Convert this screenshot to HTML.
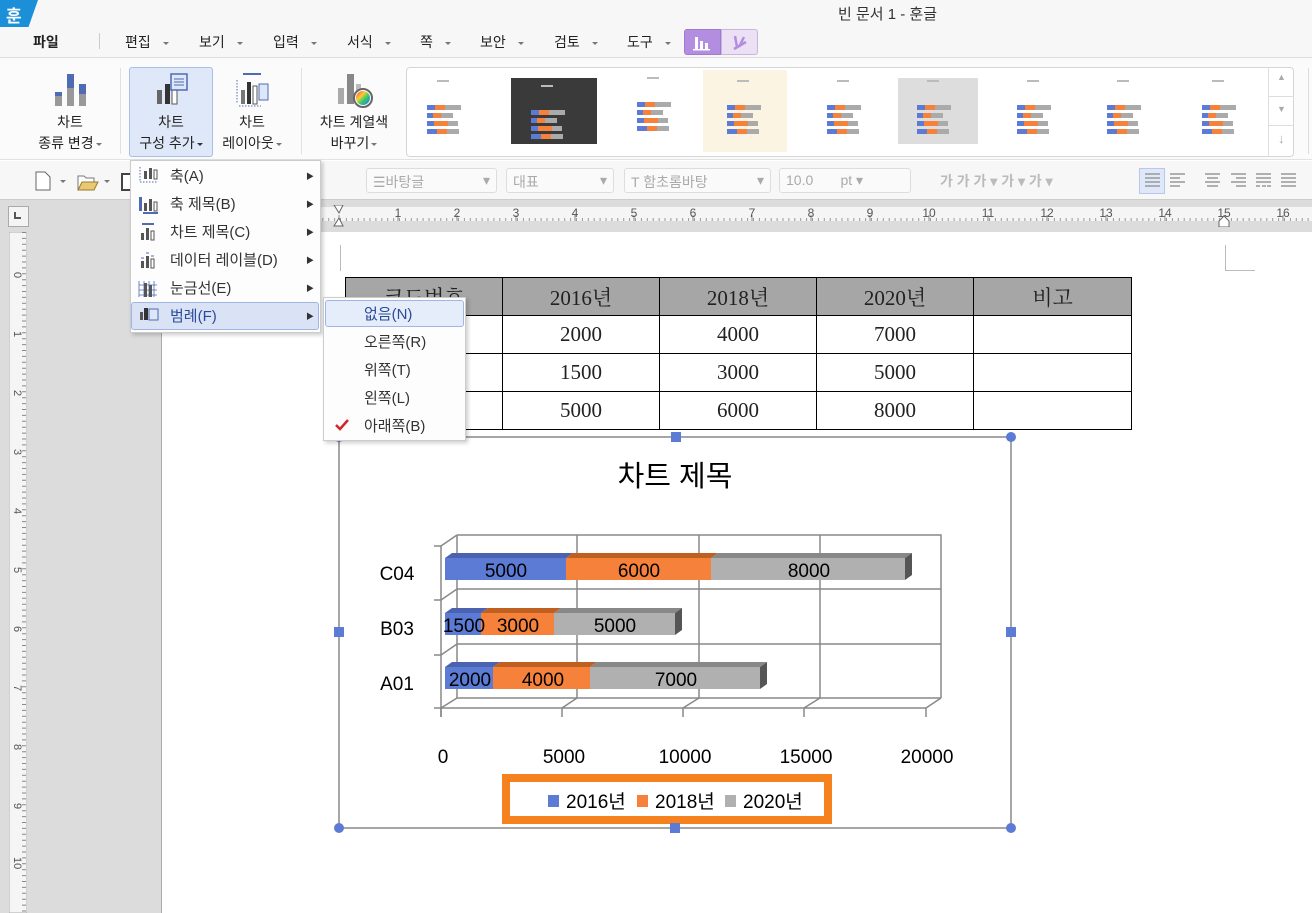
<!DOCTYPE html>
<html><head><meta charset="utf-8">
<style>
*{margin:0;padding:0;box-sizing:border-box}
body{width:1312px;height:913px;overflow:hidden;position:relative;background:#fff;font-family:"Liberation Sans","Noto Sans CJK KR",sans-serif;color:#222}
.a{position:absolute}
.t{position:absolute;white-space:nowrap}
.dd{display:inline-block;width:0;height:0;border-left:3px solid transparent;border-right:3px solid transparent;border-top:3px solid #777;vertical-align:middle;margin-left:6px}
.mi{font-size:14px;color:#222}
.rb{font-size:14px;text-align:center;line-height:21px;color:#222}
.box{position:absolute;border:1px solid #ddd;border-radius:3px;background:#fafafa;height:25px;top:168px;font-size:14px;color:#aaa;padding:3px 6px}
.menu{font-size:15px;color:#333}
.tbl td{border:1px solid #000;text-align:center;font-family:"Liberation Serif","Noto Serif CJK KR",serif;font-size:21px;height:38px}
</style></head><body>
<div class="a" style="left:0;top:0;width:1312px;height:58px;background:#f7f7f7;border-bottom:1px solid #ddd"></div>
<div class="a" style="left:0;top:0;width:38px;height:27px;background:#1c8fd9;clip-path:polygon(0 0,100% 0,75% 100%,0 100%)"></div>
<div class="t" style="left:6px;top:2px;color:#fff;font-size:17px;font-weight:bold">훈</div>
<div class="t" style="left:838px;top:3px;font-size:15px;color:#333">빈 문서 1 - 훈글</div>
<div class="t mi" style="left:33px;top:32px;font-weight:bold">파일</div>
<div class="a" style="left:99px;top:33px;width:1px;height:16px;background:#ccc"></div>
<div class="t mi" style="left:125px;top:32px">편집<span class="dd" style="margin-left:12px"></span></div>
<div class="t mi" style="left:199px;top:32px">보기<span class="dd" style="margin-left:12px"></span></div>
<div class="t mi" style="left:273px;top:32px">입력<span class="dd" style="margin-left:12px"></span></div>
<div class="t mi" style="left:347px;top:32px">서식<span class="dd" style="margin-left:12px"></span></div>
<div class="t mi" style="left:420px;top:32px">쪽<span class="dd" style="margin-left:12px"></span></div>
<div class="t mi" style="left:480px;top:32px">보안<span class="dd" style="margin-left:12px"></span></div>
<div class="t mi" style="left:554px;top:32px">검토<span class="dd" style="margin-left:12px"></span></div>
<div class="t mi" style="left:627px;top:32px">도구<span class="dd" style="margin-left:12px"></span></div>
<div class="a" style="left:684px;top:29px;width:37px;height:26px;background:#b38ee0;border:1px solid #a07ad0;border-radius:3px 0 0 3px"></div>
<svg class="a" style="left:692px;top:33px" width="20" height="18"><rect x="3" y="4" width="3" height="12" fill="#fff"/><rect x="8" y="8" width="3" height="8" fill="#fff"/><rect x="13" y="10" width="3" height="6" fill="#fff"/><rect x="1" y="16" width="17" height="1.5" fill="#fff"/></svg>
<div class="a" style="left:721px;top:29px;width:37px;height:26px;background:#ece0f4;border:1px solid #c9b3e0;border-radius:0 3px 3px 0"></div>
<svg class="a" style="left:729px;top:33px" width="20" height="18"><path d="M6 3 L8 14 M10 14 L15 4 M5 16 L17 9" stroke="#b38ee0" stroke-width="2.5" fill="none"/></svg>
<div class="a" style="left:0;top:58px;width:1312px;height:102px;background:#fbfbfb;border-bottom:1px solid #e2e2e2"></div>
<svg class="a" style="left:53px;top:72px" width="36" height="36"><rect x="2" y="20" width="7" height="14" fill="#999"/><rect x="2" y="20" width="7" height="4" fill="#4e6bb4"/><rect x="14" y="2" width="7" height="32" fill="#999"/><rect x="14" y="2" width="7" height="14" fill="#4e6bb4"/><rect x="26" y="12" width="7" height="22" fill="#999"/><rect x="26" y="12" width="7" height="10" fill="#4e6bb4"/></svg>
<div class="t rb" style="left:30px;top:112px;width:80px">차트<br>종류 변경<span class="dd" style="margin-left:2px"></span></div>
<div class="a" style="left:120px;top:68px;width:1px;height:86px;background:#e0e0e0"></div>
<div class="a" style="left:129px;top:67px;width:84px;height:90px;background:#dfe8f8;border:1px solid #a9bfe8;border-radius:3px"></div>
<svg class="a" style="left:155px;top:72px" width="36" height="36"><rect x="2" y="18" width="5" height="14" fill="#666"/><rect x="10" y="12" width="5" height="20" fill="#333"/><rect x="17" y="16" width="5" height="16" fill="#fff" stroke="#555"/><rect x="16" y="2" width="16" height="16" fill="#dde7f7" stroke="#4e6bb4" stroke-width="1.5"/><path d="M19 7h10M19 10h10M19 13h10" stroke="#4e6bb4"/></svg>
<div class="t rb" style="left:131px;top:112px;width:80px">차트<br>구성 추가<span class="dd" style="margin-left:2px;border-top-color:#333"></span></div>
<svg class="a" style="left:235px;top:72px" width="36" height="36"><rect x="8" y="1" width="18" height="2" fill="#4e6bb4"/><path d="M2 8v24M4 34h22" stroke="#4e6bb4" stroke-dasharray="1.5 1.5"/><rect x="6" y="18" width="4" height="14" fill="#777"/><rect x="12" y="10" width="4" height="22" fill="#333"/><rect x="18" y="14" width="4" height="18" fill="#fff" stroke="#555"/><rect x="24" y="12" width="9" height="16" fill="#dde7f7" stroke="#4e6bb4"/></svg>
<div class="t rb" style="left:212px;top:112px;width:80px">차트<br>레이아웃<span class="dd" style="margin-left:2px"></span></div>
<div class="a" style="left:301px;top:68px;width:1px;height:86px;background:#e0e0e0"></div>
<svg class="a" style="left:336px;top:72px" width="40" height="38"><rect x="2" y="16" width="6" height="16" fill="#aaa"/><rect x="11" y="2" width="7" height="30" fill="#888"/><rect x="20" y="12" width="5" height="20" fill="#bbb"/><circle cx="27" cy="26" r="9" fill="#fff" stroke="#666" stroke-width="2"/><circle cx="27" cy="26" r="7" fill="url(#cg)"/><defs><linearGradient id="cg" x1="0" y1="0" x2="1" y2="1"><stop offset="0" stop-color="#f33"/><stop offset=".35" stop-color="#fc3"/><stop offset=".6" stop-color="#3c6"/><stop offset="1" stop-color="#36f"/></linearGradient></defs></svg>
<div class="t rb" style="left:309px;top:112px;width:90px">차트 계열색<br>바꾸기<span class="dd" style="margin-left:2px"></span></div>
<div class="a" style="left:406px;top:67px;width:888px;height:90px;border:1px solid #d6d6d6;border-radius:4px;background:#fff"></div>
<div class="a" style="left:1268px;top:67px;width:26px;height:90px;border-left:1px solid #ddd"></div>
<div class="a" style="left:1268px;top:96px;width:26px;height:1px;background:#ddd"></div>
<div class="a" style="left:1268px;top:125px;width:26px;height:1px;background:#ddd"></div>
<div class="t" style="left:1277px;top:72px;font-size:9px;color:#aaa">▲</div>
<div class="t" style="left:1277px;top:104px;font-size:9px;color:#aaa">▼</div>
<div class="t" style="left:1278px;top:131px;font-size:13px;color:#aaa">↓</div>
<div class="a" style="left:1308px;top:68px;width:1px;height:86px;background:#ddd"></div>
<svg class="a" style="left:407px;top:68px" width="860" height="88">
<rect x="104" y="10" width="86" height="66" fill="#3a3a3a"/>
<rect x="296" y="2" width="84" height="82" fill="#fbf4e2"/>
<rect x="491" y="10" width="80" height="66" fill="#ddd"/>
<g id="th">
<rect x="20" y="37" width="8" height="5" fill="#5b7bd5"/><rect x="28" y="37" width="10" height="5" fill="#f5813a"/><rect x="38" y="37" width="16" height="5" fill="#aaa"/>
<rect x="20" y="45" width="6" height="5" fill="#5b7bd5"/><rect x="26" y="45" width="8" height="5" fill="#f5813a"/><rect x="34" y="45" width="12" height="5" fill="#aaa"/>
<rect x="20" y="53" width="7" height="5" fill="#5b7bd5"/><rect x="27" y="53" width="14" height="5" fill="#f5813a"/><rect x="41" y="53" width="10" height="5" fill="#aaa"/>
<rect x="20" y="61" width="10" height="5" fill="#5b7bd5"/><rect x="30" y="61" width="10" height="5" fill="#f5813a"/><rect x="40" y="61" width="12" height="5" fill="#aaa"/>
<rect x="30" y="12" width="12" height="2" fill="#bbb"/>
</g>
<use href="#th" x="104" y="5"/><use href="#th" x="210" y="-3"/><use href="#th" x="300"/><use href="#th" x="400"/><use href="#th" x="490"/><use href="#th" x="590"/><use href="#th" x="680"/><use href="#th" x="775"/>
</svg>
<div class="a" style="left:0;top:161px;width:1312px;height:39px;background:#f7f7f7;border-bottom:1px solid #ccc"></div>
<svg class="a" style="left:34px;top:170px" width="100" height="22"><path d="M2 2h9l5 5v13H2z" fill="#fff" stroke="#666"/><path d="M26 10l3 3 3-3" fill="#777"/><path d="M44 6h6l2 2h8v12H44z" fill="#fff" stroke="#777"/><path d="M44 20l4-8h16l-4 8z" fill="#e8c870" stroke="#9a7a30"/><path d="M70 10l3 3 3-3" fill="#777"/><rect x="88" y="4" width="10" height="16" fill="#fff" stroke="#444" stroke-width="2"/></svg>
<div class="box" style="left:366px;width:131px">&#9776;바탕글<span style="float:right">▾</span></div>
<div class="box" style="left:506px;width:108px">대표<span style="float:right">▾</span></div>
<div class="box" style="left:624px;width:147px">T 함초롬바탕<span style="float:right">▾</span></div>
<div class="box" style="left:779px;width:132px">10.0 &nbsp; &nbsp; &nbsp; pt ▾</div>
<div class="t" style="left:940px;top:171px;font-size:14px;color:#bbb;font-weight:bold">가 가 가 ▾ 가 ▾ 가 ▾</div>
<div class="a" style="left:1139px;top:168px;width:26px;height:26px;background:#dfe8f8;border:1px solid #b8c8e8"></div>
<svg class="a" style="left:1143px;top:172px" width="160" height="18"><g stroke="#999" stroke-width="1.5"><path d="M2 2h15M2 6h15M2 10h15M2 14h15"/><path d="M27 2h15M27 6h10M27 10h15M27 14h10"/><path d="M62 2h15M64 6h11M62 10h15M64 14h11"/><path d="M88 2h15M93 6h10M88 10h15M93 14h10"/><path d="M113 2h15M113 6h15M113 10h15M113 14h4M119 14h4M124 14h4"/><path d="M138 2h15M138 6h15M138 10h15M138 14h15"/></g></svg>
<div class="a" style="left:0;top:200px;width:162px;height:713px;background:#dcdcdc;border-right:1px solid #aaa"></div>
<div class="a" style="left:8px;top:206px;width:21px;height:21px;background:#f4f4f4;border:1px solid #aaa"></div>
<div class="a" style="left:14px;top:212px;width:7px;height:7px;border-left:2px solid #555;border-bottom:2px solid #555"></div>
<svg class="a" style="left:9px;top:232px" width="18" height="681">
<rect x="0" y="0" width="18" height="681" fill="#f5f5f5" stroke="#aaa"/>
<line x1="15" y1="0" x2="15" y2="681" stroke="#888" stroke-width="4" stroke-dasharray="1 4.9"/>
<g font-size="11" fill="#555" font-family="Liberation Sans">
<text transform="translate(5,40) rotate(90)">0</text><text transform="translate(5,99) rotate(90)">1</text><text transform="translate(5,158) rotate(90)">2</text><text transform="translate(5,217) rotate(90)">3</text><text transform="translate(5,276) rotate(90)">4</text><text transform="translate(5,335) rotate(90)">5</text><text transform="translate(5,394) rotate(90)">6</text><text transform="translate(5,453) rotate(90)">7</text><text transform="translate(5,512) rotate(90)">8</text><text transform="translate(5,571) rotate(90)">9</text><text transform="translate(5,625) rotate(90)">10</text></g>
</svg>
<div class="a" style="left:163px;top:200px;width:1149px;height:32px;background:#dcdcdc"></div>
<svg class="a" style="left:163px;top:205px" width="1149" height="22">
<rect x="0" y="2" width="1149" height="14" fill="#f5f5f5"/>
<g stroke="#888">
<path d="M176 10v6M235 10v6M294 10v6M353 10v6M412 10v6M471 10v6M530 10v6M589 10v6M648 10v6M707 10v6M766 10v6M825 10v6M884 10v6M943 10v6M1002 10v6M1061 10v6M1120 10v6"/>
</g>
<line x1="0" y1="14.5" x2="1149" y2="14.5" stroke="#999" stroke-width="3" stroke-dasharray="1 4.9"/>
<g font-size="12" fill="#555" font-family="Liberation Sans" text-anchor="middle">
<text x="235" y="12">1</text><text x="294" y="12">2</text><text x="353" y="12">3</text><text x="412" y="12">4</text><text x="471" y="12">5</text><text x="530" y="12">6</text><text x="589" y="12">7</text><text x="648" y="12">8</text><text x="707" y="12">9</text><text x="766" y="12">10</text><text x="825" y="12">11</text><text x="884" y="12">12</text><text x="943" y="12">13</text><text x="1002" y="12">14</text><text x="1061" y="12">15</text><text x="1120" y="12">16</text></g>
<path d="M171 0h9l-4 8z M171 21h9l-4-8z" fill="#fff" stroke="#666"/>
<path d="M1056 22v-6l5-5 5 5v6z" fill="#fff" stroke="#666"/>
</svg>
<div class="a" style="left:340px;top:245px;width:1px;height:26px;background:#bbb"></div>
<div class="a" style="left:1225px;top:245px;width:1px;height:26px;background:#bbb"></div>
<div class="a" style="left:1225px;top:270px;width:30px;height:1px;background:#bbb"></div>
<table class="tbl a" style="left:345px;top:277px;border-collapse:collapse;width:787px">
<tr style="background:#a6a6a6"><td style="width:157px">코드번호</td><td style="width:157px">2016년</td><td style="width:157px">2018년</td><td style="width:157px">2020년</td><td>비고</td></tr>
<tr><td>A01</td><td>2000</td><td>4000</td><td>7000</td><td></td></tr>
<tr><td>B03</td><td>1500</td><td>3000</td><td>5000</td><td></td></tr>
<tr><td>C04</td><td>5000</td><td>6000</td><td>8000</td><td></td></tr>
</table>
<svg class="a" style="left:0;top:0" width="1312" height="913">
<rect x="339" y="437" width="672" height="391" fill="#fff" stroke="#888" stroke-width="1.5"/>
<text x="675" y="486" font-size="29" text-anchor="middle" font-family="Liberation Sans,Noto Sans CJK KR" fill="#000">차트 제목</text>
<g stroke="#888" stroke-width="1.5" fill="none">
<path d="M457 535H941V698M457 535V698H941"/>
<path d="M577 535V698M699 535V698M820 535V698"/>
<path d="M457 589H941M457 644H941"/>
<path d="M441 546L457 535M441 600L457 589M441 655L457 644M441 708L457 698"/>
<path d="M441 546V717M434 546H441M434 600H441M434 655H441M434 708H441"/>
<path d="M441 708H926L941 698M562 708L577 698M683 708L699 698M804 708L820 698"/>
<path d="M441 708v9M562 708v9M683 708v9M804 708v9M926 708v9"/>
</g>
<polygon points="445,558 452,553 573,553 566,558" fill="#4a62b0"/><rect x="445" y="558" width="121" height="22" fill="#5b7bd5"/>
<polygon points="566,558 573,553 718,553 711,558" fill="#c06020"/><rect x="566" y="558" width="145" height="22" fill="#f5813a"/>
<polygon points="711,558 718,553 912,553 905,558" fill="#888"/><rect x="711" y="558" width="194" height="22" fill="#b0b0b0"/>
<polygon points="905,558 912,553 912,575 905,580" fill="#555"/>
<polygon points="445,613 452,608 488,608 481,613" fill="#4a62b0"/><rect x="445" y="613" width="36" height="22" fill="#5b7bd5"/>
<polygon points="481,613 488,608 561,608 554,613" fill="#c06020"/><rect x="481" y="613" width="73" height="22" fill="#f5813a"/>
<polygon points="554,613 561,608 682,608 675,613" fill="#888"/><rect x="554" y="613" width="121" height="22" fill="#b0b0b0"/>
<polygon points="675,613 682,608 682,630 675,635" fill="#555"/>
<polygon points="445,667 452,662 500,662 493,667" fill="#4a62b0"/><rect x="445" y="667" width="48" height="22" fill="#5b7bd5"/>
<polygon points="493,667 500,662 597,662 590,667" fill="#c06020"/><rect x="493" y="667" width="97" height="22" fill="#f5813a"/>
<polygon points="590,667 597,662 767,662 760,667" fill="#888"/><rect x="590" y="667" width="170" height="22" fill="#b0b0b0"/>
<polygon points="760,667 767,662 767,684 760,689" fill="#555"/>
<g font-size="19" fill="#000" font-family="Liberation Sans" text-anchor="middle">
<text x="506" y="577">5000</text><text x="639" y="577">6000</text><text x="809" y="577">8000</text>
<text x="464" y="632">1500</text><text x="518" y="632">3000</text><text x="615" y="632">5000</text>
<text x="470" y="686">2000</text><text x="543" y="686">4000</text><text x="676" y="686">7000</text>
<text x="397" y="580">C04</text><text x="397" y="635">B03</text><text x="397" y="690">A01</text>
<text x="443" y="763">0</text><text x="564" y="763">5000</text><text x="685" y="763">10000</text><text x="806" y="763">15000</text><text x="927" y="763">20000</text>
</g>
<rect x="506" y="778" width="322" height="42" fill="#fff" stroke="#f5811f" stroke-width="8"/>
<rect x="548" y="795" width="11" height="12" fill="#5b7bd5"/><rect x="637" y="795" width="11" height="12" fill="#f5813a"/><rect x="725" y="795" width="11" height="12" fill="#b0b0b0"/>
<g font-size="19" fill="#000" font-family="Liberation Sans,Noto Sans CJK KR"><text x="566" y="808">2016년</text><text x="655" y="808">2018년</text><text x="743" y="808">2020년</text></g>
<g fill="#5b7bd5"><circle cx="339" cy="437" r="5"/><circle cx="1011" cy="437" r="5"/><circle cx="339" cy="828" r="5"/><circle cx="1011" cy="828" r="5"/>
<rect x="671" y="432" width="10" height="10"/><rect x="670" y="823" width="10" height="10"/><rect x="334" y="627" width="10" height="10"/><rect x="1006" y="627" width="10" height="10"/></g>
</svg>
<div class="a" style="left:130px;top:160px;width:191px;height:173px;background:#fdfdfd;border:1px solid #ccc;box-shadow:2px 2px 4px rgba(0,0,0,.2)"></div>
<div class="a" style="left:131px;top:302px;width:188px;height:28px;background:#dae3f5;border:1px solid #9fb5e3;border-radius:3px"></div>
<svg class="a" style="left:138px;top:165px" width="24" height="164">
<g fill="#555"><rect x="6" y="6" width="3" height="8"/><rect x="11" y="3" width="3" height="11"/><rect x="16" y="5" width="3" height="9" fill="#fff" stroke="#555"/></g>
<path d="M2 2v14M2 17h18" stroke="#4e6bb4" stroke-dasharray="1.5 1.5"/>
<rect x="1" y="32" width="3" height="14" fill="#4e6bb4"/><rect x="6" y="38" width="3" height="8" fill="#555"/><rect x="11" y="34" width="3" height="12" fill="#555"/><rect x="16" y="37" width="3" height="9" fill="#fff" stroke="#555"/><rect x="5" y="47" width="15" height="2" fill="#4e6bb4"/>
<rect x="4" y="58" width="12" height="2" fill="#4e6bb4"/><rect x="3" y="68" width="3" height="7" fill="#555"/><rect x="8" y="63" width="3" height="12" fill="#555"/><rect x="13" y="66" width="3" height="9" fill="#fff" stroke="#555"/>
<rect x="3" y="96" width="3" height="7" fill="#555"/><rect x="8" y="91" width="3" height="12" fill="#555"/><rect x="13" y="94" width="3" height="9" fill="#fff" stroke="#555"/><path d="M3 93h3M8 88h3M13 91h3" stroke="#4e6bb4"/>
<path d="M1 116v16M6 116v16M11 116v16M16 116v16M1 120h18M1 125h18M1 130h18" stroke="#4e6bb4" stroke-width=".8"/><rect x="6" y="118" width="3" height="14" fill="#555"/><rect x="11" y="120" width="3" height="12" fill="#555"/>
<rect x="2" y="147" width="3" height="8" fill="#555"/><rect x="6" y="143" width="4" height="12" fill="#333"/><rect x="11" y="144" width="9" height="11" fill="#dde7f7" stroke="#4e6bb4"/>
</svg>
<div class="t menu" style="left:170px;top:165px">축(A)</div>
<div class="t menu" style="left:170px;top:193px">축 제목(B)</div>
<div class="t menu" style="left:170px;top:221px">차트 제목(C)</div>
<div class="t menu" style="left:170px;top:249px">데이터 레이블(D)</div>
<div class="t menu" style="left:170px;top:277px">눈금선(E)</div>
<div class="t menu" style="left:170px;top:305px;color:#2b4a9a">범례(F)</div>
<div class="t" style="left:306px;top:163px;font-size:8px;color:#333;line-height:28px">▶<br>▶<br>▶<br>▶<br>▶<br>▶</div>
<div class="a" style="left:323px;top:297px;width:143px;height:144px;background:#fdfdfd;border:1px solid #ccc;box-shadow:2px 2px 4px rgba(0,0,0,.2)"></div>
<div class="a" style="left:325px;top:300px;width:139px;height:27px;background:#e6edfa;border:1px solid #9fb5e3;border-radius:3px"></div>
<div class="t menu" style="left:364px;top:303px;color:#2b4a9a">없음(N)</div>
<div class="t menu" style="left:364px;top:331px">오른쪽(R)</div>
<div class="t menu" style="left:364px;top:359px">위쪽(T)</div>
<div class="t menu" style="left:364px;top:387px">왼쪽(L)</div>
<div class="t menu" style="left:364px;top:415px">아래쪽(B)</div>
<svg class="a" style="left:334px;top:418px" width="16" height="14"><path d="M2 7l4 4 8-9" stroke="#d0262b" stroke-width="2.5" fill="none"/></svg>
</body></html>
